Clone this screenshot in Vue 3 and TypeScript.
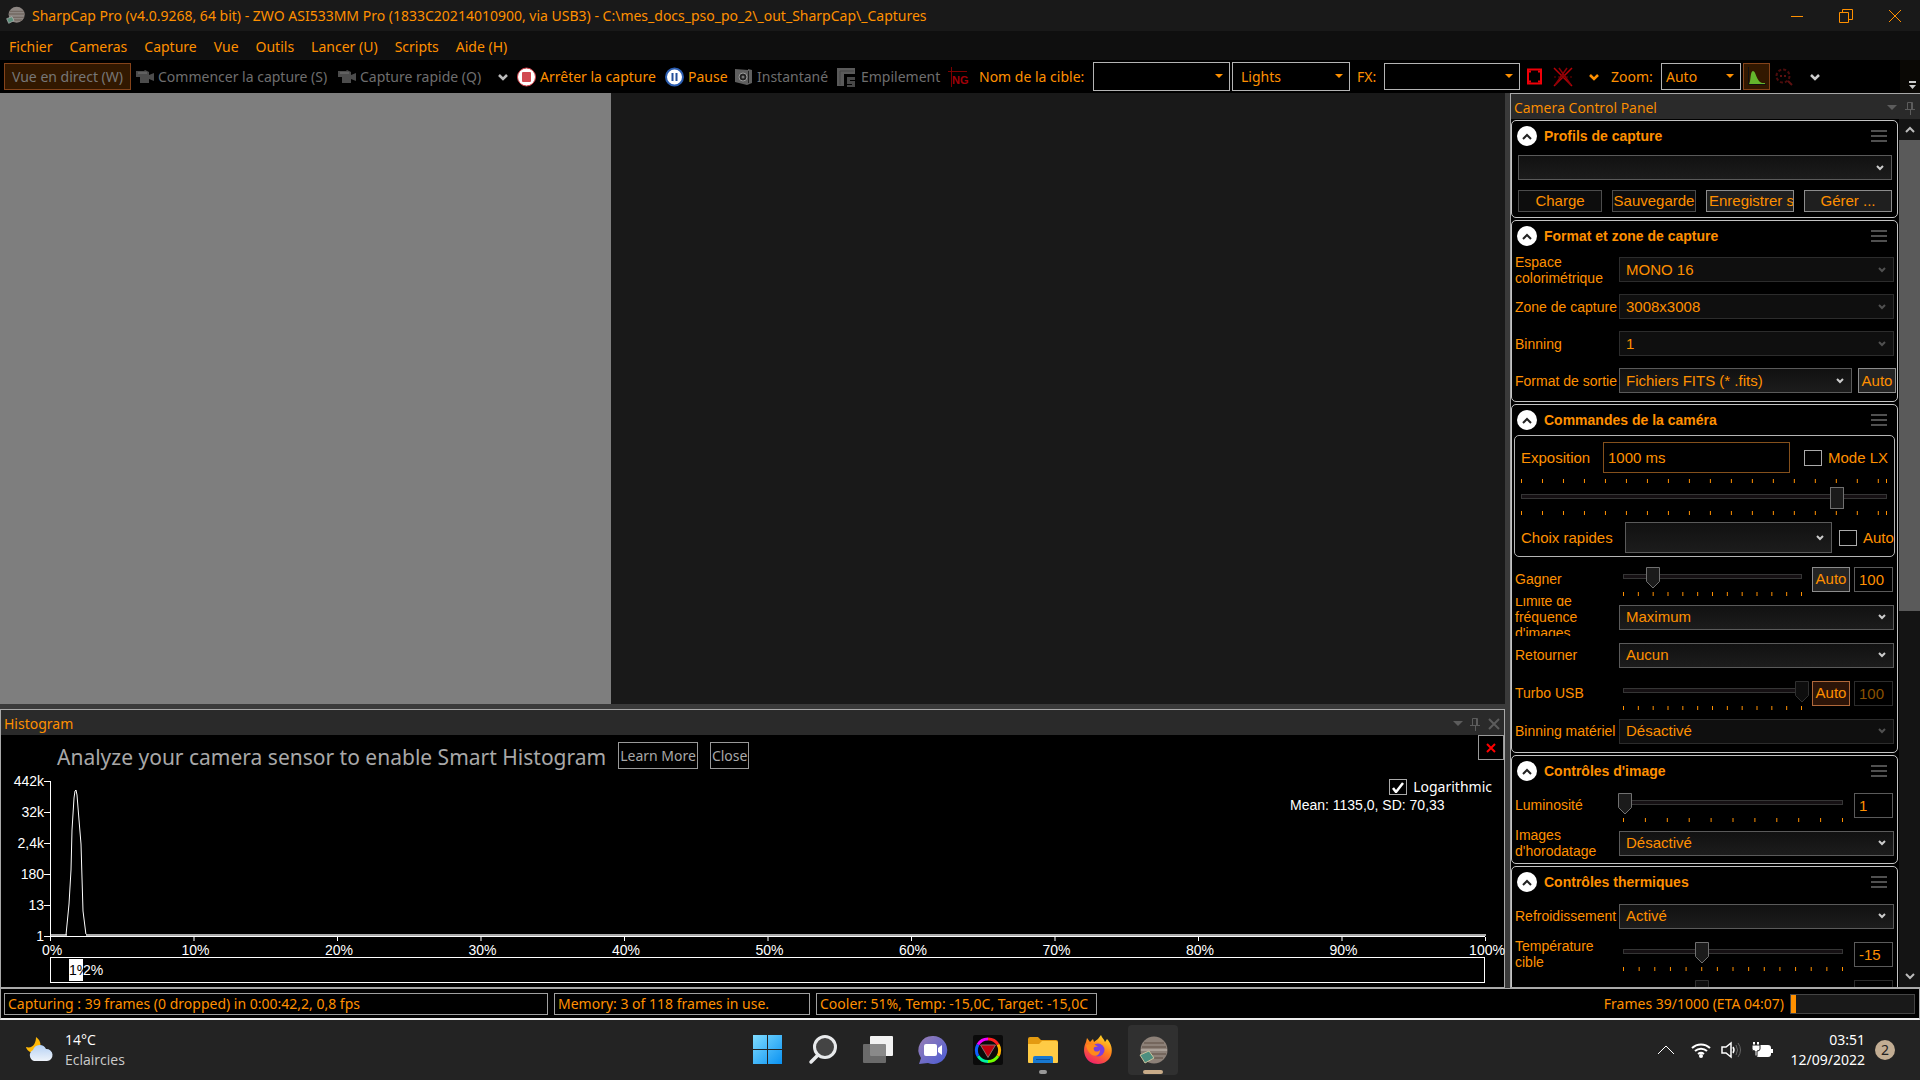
<script setup lang="ts">
import { ref } from 'vue'

const menus = ['Fichier', 'Cameras', 'Capture', 'Vue', 'Outils', 'Lancer (U)', 'Scripts', 'Aide (H)']
const yLabels = ['442k', '32k', '2,4k', '180', '13', '1']
const xLabels = Array.from({ length: 11 }, (_, i) => i * 10)

const even = (steps: number): number[] => Array.from({ length: steps + 1 }, (_, i) => (i * 100) / steps)
const exposureTicks = [...Array.from({ length: 18 }, (_, i) => i * 5.75), 100]
const gainTicks = even(12)
const brightnessTicks = even(10)
const temperatureTicks = even(14)

const exposure = ref('1000 ms')
const exposurePos = ref(864)
const gain = ref(100)
const turbo = ref(100)
const brightness = ref(1)
const target = ref(-15)
const logarithmic = ref(true)
const lxMode = ref(false)
const autoExposure = ref(false)
</script>

<template>
  <div class="app">
    <header class="titlebar">
      <svg class="planet" width="20" height="20" viewBox="0 0 30 30">
        <circle cx="16" cy="13" r="12" fill="#8d8682" />
        <path d="M5 8h22M4 12h24M5 17h22M8 21h16" stroke="#736963" stroke-width="2" />
        <path d="M1 19l8-3 3 6-8 4z" fill="#5d8f7c" stroke="#bbb" />
      </svg>
      <h1>SharpCap Pro (v4.0.9268, 64 bit) - ZWO ASI533MM Pro (1833C20214010900, via USB3) - C:\mes_docs_pso_po_2\_out_SharpCap\_Captures</h1>
      <div class="win-controls">
        <button aria-label="Réduire"><svg width="14" height="14"><path d="M1 7.500h12" /></svg></button>
        <button aria-label="Restaurer"><svg width="16" height="16"><path d="M1.500 4.500h9v10h-9zM4.500 4.500v-3h10v10h-4" /></svg></button>
        <button aria-label="Fermer"><svg width="14" height="14"><path d="M1 1l12 12M13 1L1 13" /></svg></button>
      </div>
    </header>

    <nav class="menubar">
      <a v-for="m in menus" :key="m" href="#">{{ m }}</a>
    </nav>

    <div class="toolbar">
      <button class="live" disabled>Vue en direct (W)</button>
      <button class="tool start" disabled>
        <svg width="18" height="16" viewBox="0 0 18 16"><path d="M0 2h8l1-1 4 2v3l5-2v8l-5-2v4H4V8H0z" fill="#4c4c4c" /><path d="M2 4h9" stroke="#777" /></svg>
        Commencer la capture (S)
      </button>
      <button class="tool quick" disabled>
        <svg width="18" height="16" viewBox="0 0 18 16"><path d="M0 2h8l1-1 4 2v3l5-2v8l-5-2v4H4V8H0z" fill="#4c4c4c" /><path d="M2 4h9" stroke="#777" /></svg>
        Capture rapide (Q)
      </button>
      <button class="drop quick-more" aria-label="Options de capture"><svg width="12" height="8"><path d="M2 2l4 4 4-4" stroke="#bbb" stroke-width="2.500" fill="none" /></svg></button>
      <button class="tool stop">
        <svg width="19" height="20" viewBox="0 0 19 20"><circle cx="9.500" cy="10" r="9" fill="#fff" stroke="#d04048" /><rect x="5" y="5" width="9" height="10" rx="1" fill="#d24a52" /></svg>
        Arrêter la capture
      </button>
      <button class="tool pause">
        <svg width="19" height="20" viewBox="0 0 19 20"><circle cx="9.500" cy="10" r="8.500" fill="#fff" stroke="#2b5db0" stroke-width="2" /><path d="M7.500 6v8M11.500 6v8" stroke="#234f9a" stroke-width="2" /></svg>
        Pause
      </button>
      <button class="tool snap" disabled>
        <svg width="18" height="18" viewBox="0 0 18 18"><path d="M0 1l13 1v-1l4 1v13l-5 2-12-3z" fill="#5f5f5f" /><circle cx="8" cy="9" r="4" fill="#222" stroke="#999" /><circle cx="8" cy="9" r="1.500" fill="#777" /><path d="M13.500 3v12" stroke="#222" /></svg>
        Instantané
      </button>
      <button class="tool stack" disabled>
        <svg width="20" height="20" viewBox="0 0 20 20"><path d="M0 1h18v6H7v12H0z" fill="#5a5a5a" /><path d="M3 4h14M3 4v14" stroke="#444" /><path d="M10 10h8v3h-5v1h5v6h-8v-2h5v-1h-5z" fill="#484848" /></svg>
        Empilement
      </button>
      <button class="icon-btn" aria-label="Nouveau groupe">
        <svg width="20" height="20"><path d="M0 4.500h19M3.500 0v20" stroke="#7c0000" /><text x="4" y="17" font-size="11" font-weight="bold" fill="#a00008">NG</text></svg>
      </button>
      <label class="target-label" for="target">Nom de la cible:</label>
      <select id="target" class="tb-select tall name"><option></option></select>
      <select class="tb-select tall kind" aria-label="Type"><option>Lights</option></select>
      <label class="fx-label" for="fx">FX:</label>
      <select id="fx" class="tb-select fx"><option></option></select>
      <button class="icon-btn area" aria-label="Zone de sélection">
        <svg width="16" height="17"><rect x="1" y="1.500" width="13" height="14" fill="none" stroke="#f00008" stroke-width="2" /><path d="M2 3.500h2M11 3.500h2M2 13.500h2M11 13.500h2" stroke="#f00008" stroke-width="2" /></svg>
      </button>
      <button class="icon-btn reticle" aria-label="Réticule">
        <svg width="21" height="20" fill="none"><path d="M1 1l18 18M19 1L1 19" stroke="#b80006" stroke-width="1.500" /><path d="M6 1l12 17M14 1L2 18" stroke="#8c0006" stroke-width="1.500" /><path d="M1 10h19" stroke="#700" stroke-dasharray="2 2" /></svg>
      </button>
      <button class="drop fx-more" aria-label="Réticules"><svg width="12" height="8"><path d="M2 2l4 4 4-4" stroke="#ff9000" stroke-width="2.500" fill="none" /></svg></button>
      <label class="zoom-label" for="zoom">Zoom:</label>
      <select id="zoom" class="tb-select zoom"><option>Auto</option></select>
      <button class="histo-btn" aria-label="Histogramme">
        <svg width="20" height="19"><path d="M1.500 0v17.500H19" stroke="#111" fill="none" /><path d="M2 17c2-2 1-13 4-13s3 10 9 12h3v1z" fill="#64b52c" /></svg>
      </button>
      <button class="icon-btn focus" aria-label="Mise au point">
        <svg width="18" height="18"><circle cx="8" cy="8" r="6.500" fill="none" stroke="#4c0c0c" stroke-width="2" stroke-dasharray="3 2" /><path d="M5 8h2M9 8h2M13 13l4 4" stroke="#5c1010" stroke-width="2" /></svg>
      </button>
      <button class="drop" aria-label="Plus d'outils"><svg width="12" height="8"><path d="M2 2l4 4 4-4" stroke="#ccc" stroke-width="2.500" fill="none" /></svg></button>
      <span class="overflow"><svg width="8" height="9"><path d="M0 1h7" stroke="#ccc" stroke-width="2" /><path d="M0 4h7l-3.500 4z" fill="#ccc" /></svg></span>
    </div>

    <main class="main">
      <div class="left">
        <div class="view"><div class="frame"></div></div>

        <section class="histogram">
          <div class="dock-head">
            <h2>Histogram</h2>
            <svg width="54" height="16" fill="none" stroke="#5c5c5c">
              <path d="M3 5h10l-5 5z" fill="#5c5c5c" stroke="none" />
              <path d="M22.500 2.500h5v7h-5zM20 9.500h10M25.500 10v5M26.500 3v6" />
              <path d="M39 3l10 10M49 3L39 13" stroke-width="2" />
            </svg>
          </div>
          <div class="promo">
            <p>Analyze your camera sensor to enable Smart Histogram</p>
            <button>Learn More</button>
            <button>Close</button>
          </div>
          <button class="dismiss" aria-label="Fermer le message"><svg width="10" height="10"><path d="M1 1l8 8M9 1L1 9" stroke="#f00" stroke-width="2" /></svg></button>
          <div class="stats">
            <label class="check white"><input v-model="logarithmic" type="checkbox" />Logarithmic</label>
            <p>Mean: 1135,0, SD: 70,33</p>
          </div>
          <div class="plot">
            <ul><li v-for="y in yLabels" :key="y">{{ y }}</li></ul>
            <svg class="axes" width="100%" height="178">
              <rect x="1" y="154" width="100%" height="2" fill="#aaa" />
              <rect x="0" y="156" width="100%" height="1" fill="#fff" />
              <rect x="0" y="1" width="1" height="156" fill="#fff" />
              <rect v-for="(y, i) in yLabels" :key="y" x="-6" :y="1 + i * 31" width="7" height="1" fill="#fff" />
              <path d="M16 155L19 124L21 90L22 50L24 18L25 11L26 10L27 15L29 40L31 64L32 98L33 131L36 155" fill="none" stroke="#fff" />
              <rect x="17" y="154" width="19" height="2" fill="#000" />
              <g v-for="x in xLabels" :key="x">
                <rect :x="x + '%'" y="157" width="1" height="4" fill="#fff" />
                <text :x="x + '%'" y="175" dx="2" text-anchor="middle">{{ x }}%</text>
              </g>
            </svg>
            <div class="band"><span class="block">1%</span><span>2%</span></div>
          </div>
        </section>
      </div>

      <aside class="panel">
        <div class="dock-head">
          <h2>Camera Control Panel</h2>
          <svg width="36" height="16" fill="none" stroke="#5c5c5c">
            <path d="M3 5h10l-5 5z" fill="#5c5c5c" stroke="none" />
            <path d="M23.500 2.500h5v7h-5zM21 9.500h10M26.500 10v5M27.500 3v6" />
          </svg>
        </div>
        <div class="scroller">
          <div class="sections">
            <section class="card">
              <header><button class="fold" aria-label="Replier"></button><h3>Profils de capture</h3><span class="burger"></span></header>
              <select class="box profile" aria-label="Profil"><option></option></select>
              <div class="profile-buttons">
                <button class="dim">Charge</button><button class="dim">Sauvegarde</button><button>Enregistrer sous</button><button>Gérer ...</button>
              </div>
            </section>

            <section class="card format">
              <header><button class="fold" aria-label="Replier"></button><h3>Format et zone de capture</h3><span class="burger"></span></header>
              <div class="row"><label for="space">Espace<br />colorimétrique</label><select id="space" class="box" disabled><option>MONO 16</option></select></div>
              <div class="row"><label for="roi">Zone de capture</label><select id="roi" class="box" disabled><option>3008x3008</option></select></div>
              <div class="row"><label for="bin">Binning</label><select id="bin" class="box" disabled><option>1</option></select></div>
              <div class="row output"><label for="out">Format de sortie</label><select id="out" class="box"><option>Fichiers FITS (* .fits)</option></select><button class="auto">Auto</button></div>
            </section>

            <section class="card controls">
              <header><button class="fold" aria-label="Replier"></button><h3>Commandes de la caméra</h3><span class="burger"></span></header>
              <div class="group">
                <div class="line">
                  <label for="exp">Exposition</label>
                  <input id="exp" v-model="exposure" class="exp" type="text" />
                  <label class="check"><input v-model="lxMode" type="checkbox" />Mode LX</label>
                </div>
                <div class="slider wide">
                  <svg class="ticks" width="100%" height="5"><rect v-for="t in exposureTicks" :key="t" :x="t + '%'" y="0" width="1" height="4" /></svg>
                  <input v-model.number="exposurePos" type="range" min="0" max="1000" aria-label="Exposition" />
                  <svg class="ticks" width="100%" height="5"><rect v-for="t in exposureTicks" :key="t" :x="t + '%'" y="0" width="1" height="4" /></svg>
                </div>
                <div class="line quickline">
                  <label for="quick">Choix rapides</label>
                  <select id="quick" class="box"><option></option></select>
                  <label class="check"><input v-model="autoExposure" type="checkbox" />Auto</label>
                </div>
              </div>
              <div class="row">
                <label for="gain">Gagner</label>
                <div class="slider"><input v-model.number="gain" type="range" min="0" max="600" aria-label="Gagner" /><svg class="ticks" width="100%" height="5"><rect v-for="t in gainTicks" :key="t" :x="t + '%'" width="1" height="4" /></svg></div>
                <button class="auto">Auto</button><input id="gain" :value="gain" class="num" type="text" />
              </div>
              <div class="row"><label for="fps">Limite de<br />fréquence<br />d'images</label><select id="fps" class="box"><option>Maximum</option></select></div>
              <div class="row"><label for="flip">Retourner</label><select id="flip" class="box"><option>Aucun</option></select></div>
              <div class="row">
                <label for="turbo">Turbo USB</label>
                <div class="slider"><input v-model.number="turbo" type="range" min="0" max="100" aria-label="Turbo USB" disabled /><svg class="ticks" width="100%" height="5"><rect v-for="t in gainTicks" :key="t" :x="t + '%'" width="1" height="4" /></svg></div>
                <button class="auto on">Auto</button><input id="turbo" :value="turbo" class="num" type="text" disabled />
              </div>
              <div class="row"><label for="hbin">Binning matériel</label><select id="hbin" class="box" disabled><option>Désactivé</option></select></div>
            </section>

            <section class="card image">
              <header><button class="fold" aria-label="Replier"></button><h3>Contrôles d'image</h3><span class="burger"></span></header>
              <div class="row">
                <label for="lum">Luminosité</label>
                <div class="slider"><input v-model.number="brightness" type="range" min="0" max="100" aria-label="Luminosité" /><svg class="ticks" width="100%" height="5"><rect v-for="t in brightnessTicks" :key="t" :x="t + '%'" width="1" height="4" /></svg></div>
                <input id="lum" :value="brightness" class="num" type="text" />
              </div>
              <div class="row"><label for="stamp">Images<br />d'horodatage</label><select id="stamp" class="box"><option>Désactivé</option></select></div>
            </section>

            <section class="card">
              <header><button class="fold" aria-label="Replier"></button><h3>Contrôles thermiques</h3><span class="burger"></span></header>
              <div class="row"><label for="cool">Refroidissement</label><select id="cool" class="box"><option>Activé</option></select></div>
              <div class="row">
                <label for="temp">Température<br />cible</label>
                <div class="slider"><input v-model.number="target" type="range" min="-40" max="30" aria-label="Température cible" /><svg class="ticks" width="100%" height="5"><rect v-for="t in temperatureTicks" :key="t" :x="t + '%'" width="1" height="4" /></svg></div>
                <input id="temp" :value="target" class="num" type="text" />
              </div>
              <div class="row">
                <label></label>
                <div class="slider"><input type="range" min="0" max="100" value="36" aria-label="Température" disabled /></div>
                <input class="num" type="text" aria-label="Température" disabled />
              </div>
            </section>
          </div>
          <div class="scrollbar">
            <svg width="10" height="7"><path d="M1 6l4-4 4 4" /></svg>
            <div class="rail"><div class="thumb"></div></div>
            <svg width="10" height="7"><path d="M1 1l4 4 4-4" /></svg>
          </div>
        </div>
      </aside>
    </main>

    <div class="status">
      <span class="cell capturing">Capturing : 39 frames (0 dropped) in 0:00:42,2, 0,8 fps</span>
      <span class="cell memory">Memory: 3 of 118 frames in use.</span>
      <span class="cell cooler">Cooler: 51%, Temp: -15,0C, Target: -15,0C</span>
      <span class="frames">Frames 39/1000 (ETA 04:07)</span>
      <span class="progress"><span></span></span>
    </div>

    <footer class="taskbar">
      <div class="weather">
        <svg width="28" height="28" viewBox="0 0 28 28">
          <defs><linearGradient id="cloud" x1="0" y1="0" x2="0" y2="1"><stop offset="0" stop-color="#b4d0f4" /><stop offset="1" stop-color="#eef3fa" /></linearGradient></defs>
          <path d="M10 1c6 4 6 12 0 15C6 18 1 15 0 11c7 2 10-4 10-10z" fill="#ffb808" />
          <path d="M8 25a6 6 0 0 1-1-11 7 7 0 0 1 13-1 6 6 0 0 1 1 12z" fill="url(#cloud)" />
        </svg>
        <p>14°C<br /><span>Eclaircies</span></p>
      </div>
      <div class="apps">
        <button aria-label="Démarrer">
          <svg width="30" height="30"><defs><linearGradient id="win" x1="0" y1="0" x2="1" y2="1"><stop offset="0" stop-color="#7fdcff" /><stop offset="1" stop-color="#0a92f2" /></linearGradient></defs><path d="M0 0h14v14H0zM15 0h14v14H15zM0 15h14v14H0zM15 15h14v14H15z" fill="url(#win)" /></svg>
        </button>
        <button aria-label="Rechercher">
          <svg width="30" height="30"><circle cx="17" cy="12" r="10.500" fill="#444" stroke="#e8eaec" stroke-width="3" /><path d="M10 20l-7 7" stroke="#e8eaec" stroke-width="3.500" stroke-linecap="round" /></svg>
        </button>
        <button aria-label="Vue des tâches">
          <svg width="30" height="30"><rect x="7" y="1" width="23" height="20" rx="1" fill="#f2f2f2" /><rect x="0" y="9" width="23" height="19" rx="1" fill="#777" opacity=".85" /></svg>
        </button>
        <button aria-label="Conversation">
          <svg width="30" height="30"><defs><linearGradient id="chat" x1="0" y1="0" x2="1" y2="1"><stop offset="0" stop-color="#9a7fb4" /><stop offset="1" stop-color="#4a5cd6" /></linearGradient></defs><path d="M15 1a14 14 0 1 1-5 27l-9 1 2-6A14 14 0 0 1 15 1z" fill="url(#chat)" /><rect x="6" y="9" width="13" height="12" rx="2" fill="#fff" /><path d="M20 13l4-3v10l-4-3z" fill="#fff" /></svg>
        </button>
        <button aria-label="Couleurs">
          <svg width="30" height="30" fill="none" stroke-width="3"><rect width="30" height="30" rx="2" fill="#0a0a0a" /><g><path d="M15 4a11.500 11.500 0 0 1 10 5.500" stroke="#ff2020" /><path d="M25 9.500a11.500 11.500 0 0 1 0 11.500" stroke="#ffb000" /><path d="M25 21a11.500 11.500 0 0 1-10 5.500" stroke="#70ff00" /><path d="M15 26.500a11.500 11.500 0 0 1-10-5.500" stroke="#00f0a0" /><path d="M5 21a11.500 11.500 0 0 1 0-11.500" stroke="#1060ff" /><path d="M5 9.500A11.500 11.500 0 0 1 15 4" stroke="#f000ff" /></g><path d="M7.500 10h15L15 22.500z" fill="#c00010" stroke="#8c6a6a" stroke-width="1" /></svg>
        </button>
        <button class="open" aria-label="Explorateur">
          <svg width="30" height="28"><path d="M0 3q0-2 2-2h8l3 3h15q2 0 2 2v6H0z" fill="#e39a10" /><path d="M0 8h11l3-3h14q2 0 2 2v19q0 1-1 1H1q-1 0-1-1z" fill="#ffcb45" /><path d="M5 27v-5q0-2 2-2h16q2 0 2 2v5z" fill="#1878d0" /><path d="M8 23.500h14" stroke="#0c4f94" /></svg>
        </button>
        <button aria-label="Firefox">
          <svg width="30" height="30"><defs><linearGradient id="fox" x1=".8" y1="0" x2=".3" y2="1"><stop offset="0" stop-color="#ffe226" /><stop offset=".5" stop-color="#ff7a1c" /><stop offset="1" stop-color="#f0206c" /></linearGradient></defs><path d="M18 0c1 3 3 4 4 7l2-3c9 9 5 25-9 25C3 29-2 17 3 7l1-4 3 4 3-3 1 3q4-2 7-7z" fill="url(#fox)" /><circle cx="15" cy="15" r="6.500" fill="#7a3ee0" /><path d="M3 10c5-2 9-1 12 2-4-1-5 1-4 3s4 2 6 0c0 5-4 7-8 5-3-2-5-5-6-10z" fill="#ff8a1c" /></svg>
        </button>
        <button class="current" aria-label="SharpCap">
          <svg width="30" height="30" viewBox="0 0 30 30"><circle cx="16" cy="15" r="13.500" fill="#8d8178" /><path d="M6 8h20M4 12h24M4 19h24M7 23h18" stroke="#75675d" stroke-width="2" /><path d="M3 15h26" stroke="#aaa097" stroke-width="2" /><path d="M2 20l9-4 5 7-9 5z" fill="#4d8f80" stroke="#c9c39c" /></svg>
        </button>
      </div>
      <div class="tray">
        <svg width="18" height="12"><path d="M1 10l8-8 8 8" /></svg>
        <svg class="wifi" width="20" height="16"><path d="M1 6a13 13 0 0 1 18 0M4 9a9 9 0 0 1 12 0M7 12a5 5 0 0 1 6 0" stroke-width="2" /><circle cx="10" cy="14" r="2" fill="#fff" stroke="none" /></svg>
        <svg class="vol" width="21" height="16"><path d="M1 5h4l5-4v14l-5-4H1zM12 5q2 3 0 6" stroke-width="1.500" /><path d="M15 3q3 5 0 10M17 1q5 7 0 14" stroke="#666" /></svg>
        <svg class="bat" width="21" height="17"><rect x="5" y="4" width="13" height="10" rx="2" fill="#fff" stroke-width="2" /><path d="M20 7v4M2 0v3M6 0v3" stroke-width="2" /><path d="M0 3h8v4q0 2-3 2v5H3V9Q0 9 0 7z" fill="#fff" stroke="#232323" /></svg>
        <p>03:51<br />12/09/2022</p>
        <span class="badge">2</span>
      </div>
    </footer>
  </div>
</template>

<style>
body { background: #000; }
</style>

<style scoped>
* { box-sizing: border-box; margin: 0; padding: 0; }
button, select, input { font: inherit; color: inherit; background: none; border: 0; border-radius: 0; appearance: none; outline: 0; }
ul { list-style: none; }
svg { flex: none; overflow: visible; display: block; }
.app { display: flex; flex-direction: column; height: 100vh; overflow: hidden; font: 14px/20px "Noto Sans", "Open Sans", sans-serif; color: #ff9000; background: #000; }

.titlebar { flex: none; display: flex; align-items: center; height: 31px; padding-left: 6px; gap: 6px; background: #191919; }
.titlebar h1 { font-size: 14px; font-weight: 400; white-space: nowrap; }
.win-controls { display: flex; margin-left: auto; padding-right: 1px; }
.win-controls button { width: 49px; height: 30px; display: grid; place-items: center; }
.win-controls path { fill: none; stroke: #ff9000; }

.menubar { flex: none; display: flex; align-items: center; gap: 17px; height: 29px; padding: 2px 9px 0; background: #0f0f0f; }
.menubar a { color: inherit; text-decoration: none; }

.toolbar { flex: none; display: flex; align-items: center; height: 33px; padding-left: 4px; white-space: nowrap; }
.live { flex: none; width: 127px; height: 27px; border: 1px solid #84431a; background: #321800; color: #777; }
.tool { display: flex; align-items: center; gap: 4px; flex: none; height: 27px; }
.tool:disabled { color: #6e6e6e; }
.start { width: 202px; margin-left: 5px; }
.quick { width: 151px; }
.drop { flex: none; width: 24px; display: grid; place-items: center; }
.quick-more { width: 28px; }
.stop { width: 148px; }
.pause { width: 70px; }
.snap { width: 102px; }
.stack { width: 111px; }
.icon-btn { flex: none; width: 31px; }
.icon-btn text { font-family: "Liberation Sans", sans-serif; }
.target-label { width: 114px; }
.tb-select { flex: none; height: 27px; padding: 0 8px; border: 1px solid #b4b4b4; background: #000 url("data:image/svg+xml,%3Csvg xmlns='http://www.w3.org/2000/svg' width='8' height='5'%3E%3Cpath d='M0 0h8L4 4z' fill='%23ff9000'/%3E%3C/svg%3E") no-repeat right 6px center; }
.tall { height: 29px; }
.name { width: 137px; }
.kind { width: 118px; margin-left: 2px; }
.fx-label { width: 27px; margin-left: 7px; }
.fx { width: 136px; }
.area { width: 26px; margin-left: 7px; }
.reticle { width: 28px; }
.fx-more { width: 25px; }
.zoom-label { width: 50px; margin-left: 5px; }
.zoom { width: 80px; padding-left: 4px; }
.histo-btn { flex: none; width: 27px; height: 27px; margin-left: 2px; display: grid; place-items: center; border: 1px solid #84431a; background: #321800; }
.focus { margin-left: 5px; width: 28px; }
.overflow { margin-left: auto; width: 20px; height: 33px; padding: 21px 0 0 9px; background: #0a0805; }

.main { flex: 1; min-height: 0; display: flex; gap: 5px; background: #3a3a3a; }
.left { flex: 1; min-width: 0; display: flex; flex-direction: column; gap: 5px; }
.view { flex: 1; min-height: 0; background: #191919; }
.frame { height: 100%; aspect-ratio: 1; background: #7e7e7e; }
.histogram { position: relative; flex: none; height: 279px; border: 1px solid #a8a8a8; background: #000; color: #fff; }
.dock-head { display: flex; align-items: center; justify-content: space-between; height: 25px; padding: 2px 0 0 3px; background: #2a2a2a; color: #ff9000; }
.dock-head h2 { font-size: 14px; font-weight: 400; }
.promo { display: flex; align-items: center; gap: 12px; height: 43px; padding: 0 0 2px 56px; color: #a8a8a8; }
.promo p { font-size: 21px; line-height: 30px; padding-top: 2px; white-space: nowrap; }
.promo button { height: 27px; padding: 0 1px; border: 1px solid #999; white-space: nowrap; }
.dismiss { position: absolute; top: 25px; right: 0; width: 26px; height: 25px; display: grid; place-items: center; border: 1px solid #999; }
.stats { position: absolute; top: 67px; right: 12px; }
.stats p { font: 14px/16px "Liberation Sans", Arial, sans-serif; width: 202px; }
.check { display: flex; align-items: center; gap: 6px; white-space: nowrap; }
.check input { width: 18px; height: 16px; border: 1px solid #aaa; }
.check input:checked { background: url("data:image/svg+xml,%3Csvg xmlns='http://www.w3.org/2000/svg' width='12' height='11'%3E%3Cpath d='M1 6l3 4 7-9' fill='none' stroke='white' stroke-width='2.500'/%3E%3C/svg%3E") no-repeat center; }
.check.white { justify-content: flex-end; font-size: 14px; }
.plot { display: grid; grid-template-columns: 43px 1fr; column-gap: 6px; padding: 2px 19px 0 0; font: 14px/31px "Liberation Sans", Arial, sans-serif; }
.plot ul { text-align: right; position: relative; top: -14px; height: 160px; }
.axes text { fill: #fff; }
.band { grid-column: 2; display: flex; height: 26px; padding: 1px 0 1px 18px; border: 1px solid #fff; line-height: 22px; margin-top: -1px; }
.block { width: 14px; background: #fff; color: #000; }

.panel { flex: none; width: 410px; display: flex; flex-direction: column; background: #000; border-left: 1px solid #a8a8a8; font: 15px/18px "Liberation Sans", Arial, sans-serif; }
.panel .dock-head { flex: none; height: 26px; border-top: 1px solid #a8a8a8; font-family: "Open Sans", "Noto Sans", sans-serif; }
.scroller { flex: 1; min-height: 0; display: flex; gap: 1px; border-bottom: 1px solid #a8a8a8; }
.sections { flex: 1; min-width: 0; overflow: hidden; display: flex; flex-direction: column; gap: 2px; padding-top: 1px; }
.card { flex: none; border: 1px solid #c4c4c4; border-radius: 5px; }
.card > header { display: flex; align-items: center; height: 30px; padding: 0 10px 0 5px; gap: 7px; }
.card h3 { flex: 1; font-size: 14px; font-weight: 700; }
.fold { width: 20px; height: 20px; border-radius: 50%; background: #fff url("data:image/svg+xml,%3Csvg xmlns='http://www.w3.org/2000/svg' width='10' height='7'%3E%3Cpath d='M1 6l4-4 4 4' fill='none' stroke='%23222' stroke-width='2'/%3E%3C/svg%3E") no-repeat center; }
.burger { width: 16px; height: 12px; background: repeating-linear-gradient(#505050 0 2px, transparent 2px 5px); }
.box { flex: 1; min-width: 0; height: 25px; padding: 0 6px; border: 1px solid #5a5a5a; background: url("data:image/svg+xml,%3Csvg xmlns='http://www.w3.org/2000/svg' width='8' height='6'%3E%3Cpath d='M1 1l3 3 3-3' fill='none' stroke='%23ccc' stroke-width='2'/%3E%3C/svg%3E") no-repeat right 7px center, linear-gradient(#111, #1c1c1c); }
.box:disabled { opacity: 1; color: #ff9000; border-color: #2c2c2c; background: url("data:image/svg+xml,%3Csvg xmlns='http://www.w3.org/2000/svg' width='8' height='6'%3E%3Cpath d='M1 1l3 3 3-3' fill='none' stroke='%23505050' stroke-width='2'/%3E%3C/svg%3E") no-repeat right 7px center, #0f0f0f; }
.profile { display: block; width: 374px; margin: 4px 0 10px 6px; }
.profile-buttons { display: flex; gap: 10px; padding: 0 5px 5px 6px; }
.profile-buttons button { flex: 1; min-width: 0; height: 22px; padding: 0 2px; border: 1px solid #8c8c8c; background: #1f1f1f; overflow: hidden; white-space: nowrap; text-align: center; }
.profile-buttons button:nth-child(3) { text-align: left; }
.profile-buttons .dim { background: #0d0d0d; border-color: #4c4c4c; padding: 0; }
.row { display: flex; align-items: center; height: 38px; padding: 0 3px; overflow: hidden; }
.row > label { flex: none; width: 101px; font-size: 14px; line-height: 16px; white-space: nowrap; }
.row > .box { margin-left: 3px; }
.format { padding-bottom: 2px; }
.format .row { height: 37px; }
.controls { padding-bottom: 2px; }
.image { padding-bottom: 1px; }
.auto { flex: none; width: 38px; height: 25px; margin-left: 3px; border: 1px solid #8c8c8c; background: #242424; text-align: center; }
.auto.on { border-color: #b0683a; background: #2c1408; }
.row.output { padding-right: 1px; }
.output .auto { margin-left: 6px; }
.num { flex: none; width: 39px; height: 25px; padding-left: 4px; margin: 0 1px 0 4px; border: 1px solid #5a5a5a; }
.num:disabled { color: #8a5200; border-color: #2c2c2c; }
.slider { flex: 1; min-width: 0; height: 25px; }
.slider input { display: block; width: 100%; height: 22px; background: linear-gradient(#151013, #151013) no-repeat 8px 8px / calc(100% - 16px) 3px, linear-gradient(#353535, #353535) no-repeat 7px 7px / calc(100% - 14px) 5px; }
.slider input::-webkit-slider-thumb { appearance: none; width: 14px; height: 22px; background: url("data:image/svg+xml,%3Csvg xmlns='http://www.w3.org/2000/svg' width='14' height='22'%3E%3Cpath d='M.5.500h13v14L7 21 .5 14.500z' fill='%231b1b1b' stroke='%23707070'/%3E%3C/svg%3E") no-repeat; }
.slider input:disabled::-webkit-slider-thumb { background: url("data:image/svg+xml,%3Csvg xmlns='http://www.w3.org/2000/svg' width='14' height='22'%3E%3Cpath d='M.5.500h13v14L7 21 .5 14.500z' fill='%230e0e0e' stroke='%23303030'/%3E%3C/svg%3E") no-repeat; }
.ticks { width: calc(100% - 15px); margin: 3px 0 0 7px; fill: #ff9000; }
.group { height: 122px; margin: 0 2px 3px; border: 1px solid #b4b4b4; border-radius: 5px; padding: 6px 0 0 6px; }
.line { display: flex; align-items: center; height: 31px; }
.line > label:first-child { width: 82px; }
.exp { width: 187px; height: 31px; margin-right: 14px; padding-left: 4px; border: 1px solid #84501c; }
.wide { height: 49px; margin: 0 0 0 -7px; padding-top: 6px; }
.wide .ticks { margin-top: 0; }
.wide input { margin-top: 3px; }
.wide input + .ticks { margin-top: 2px; }
.wide input::-webkit-slider-thumb { background: #1b1b1b; border: 1px solid #707070; }
.quickline > label:first-child { width: 104px; }
.quickline .box { flex: none; width: 207px; height: 31px; margin-right: 7px; }
.scrollbar { flex: none; width: 21px; display: flex; flex-direction: column; align-items: center; background: #141414; }
.scrollbar svg { margin: 7px 0; fill: none; stroke: #bbb; stroke-width: 2; }
.rail { flex: 1; align-self: stretch; }
.thumb { height: 57%; background: #5a5a5a; }

.status { flex: none; display: flex; align-items: center; gap: 6px; height: 32px; padding: 0 4px 0 3px; border: 1px solid #aaa; border-bottom: 2px solid #eee; white-space: nowrap; }
.cell { flex: none; height: 22px; padding: 0 3px; border: 1px solid #a0a0a0; line-height: 20px; }
.capturing { width: 544px; }
.memory { width: 256px; }
.cooler { width: 281px; }
.frames { margin-left: auto; }
.progress { width: 125px; height: 20px; border: 1px solid #444; background: #191919; }
.progress span { display: block; width: 5px; height: 100%; background: #ff9000; }

.taskbar { flex: none; display: grid; grid-template-columns: 1fr auto 1fr; align-items: center; height: 60px; background: #232323; color: #fff; }
.weather { display: flex; align-items: center; gap: 11px; padding-left: 26px; font-family: "Open Sans", "Noto Sans", sans-serif; }
.weather span { color: #ccc; }
.apps { display: flex; gap: 5px; }
.apps button { position: relative; width: 50px; height: 50px; display: grid; place-items: center; border-radius: 4px; }
.open::after, .current::after { content: ""; position: absolute; bottom: 1px; left: 21px; width: 8px; height: 4px; border-radius: 2px; background: #999; }
.apps .current { background: #303030; }
.current::after { left: 15px; width: 20px; background: #c8ab88; }
.tray { display: flex; align-items: center; justify-content: flex-end; padding-right: 25px; text-align: right; }
.tray svg { fill: none; stroke: #fff; margin-right: 16px; }
.tray .wifi, .tray .vol { margin-right: 10px; }
.tray .bat { margin-right: 18px; }
.badge { width: 20px; height: 20px; margin-left: 10px; border-radius: 50%; background: #c2ad93; color: #222; text-align: center; }
</style>
